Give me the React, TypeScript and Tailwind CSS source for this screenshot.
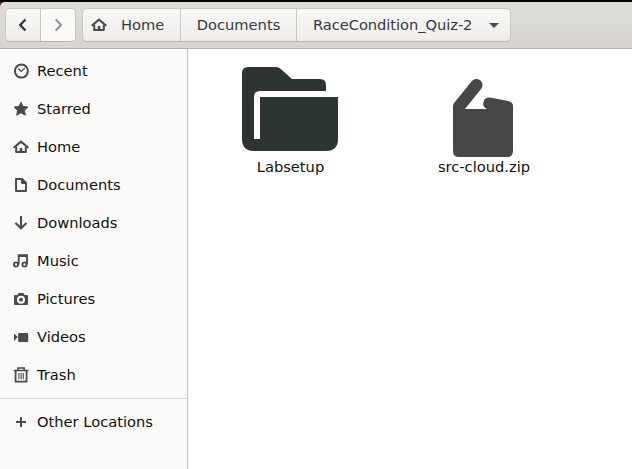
import React from "react";

type IconProps = { children: React.ReactNode };

function Icon({ children }: IconProps) {
  return (
    <svg width="16" height="16" viewBox="0 0 16 16" className="shrink-0 text-[#4a4a4a]" fill="none" stroke="currentColor" strokeWidth="2">
      {children}
    </svg>
  );
}

const house = (
  <>
    <path d="M.6 8.8 8 2.6l7.4 6.2" strokeWidth="2.1" />
    <path d="M3.2 7.5v5.6h9.6V7.5" strokeLinejoin="round" />
    <path d="M8 9v4.5" strokeWidth="2.6" />
  </>
);

const places = [
  {
    name: "Recent",
    icon: (
      <>
        <circle cx="8.4" cy="8.1" r="6.5" />
        <path d="m5.3 5.8 3 2.6 3.4-3.3" strokeWidth="1.3" />
      </>
    ),
  },
  {
    name: "Starred",
    icon: <path d="m8 1.3 2 4.2 4.9.6-3.5 3.2.9 4.9L8 11.8l-4.3 2.4.9-4.9-3.5-3.2 4.9-.6Z" fill="currentColor" strokeWidth="1" strokeLinejoin="round" />,
  },
  { name: "Home", icon: house },
  { name: "Documents", icon: <path d="M3 2h6.2L13 5.8V14H3ZM9 2.5V6h3.5" strokeLinejoin="round" strokeWidth="1.9" /> },
  { name: "Downloads", icon: <path d="M8 1v12M2.5 8 8 13.2 13.5 8" strokeWidth="2.1" /> },
  {
    name: "Music",
    icon: (
      <>
        <circle cx="3" cy="11.5" r="2.1" strokeWidth="1.8" />
        <circle cx="11.5" cy="11.5" r="2.1" strokeWidth="1.8" />
        <path d="M5.7 11.5V2.2h8.3v9.3M5.7 3H14" strokeWidth="1.8" />
      </>
    ),
  },
  {
    name: "Pictures",
    icon: (
      <path
        fill="currentColor"
        stroke="none"
        fillRule="evenodd"
        d="M5.5 2h5l1 2H14q1 0 1 1v8q0 1-1 1H2q-1 0-1-1V5q0-1 1-1h2.5ZM8 4.7a4 4 0 1 0 0 8 4 4 0 0 0 0-8Zm0 2.1a1.9 1.9 0 1 1 0 3.8 1.9 1.9 0 0 1 0-3.8Z"
      />
    ),
  },
  {
    name: "Videos",
    icon: <path fill="currentColor" stroke="none" d="M1 4.5 4.8 8 1 12ZM6.3 4H14q1.2 0 1.2 1.2v6.6q0 1.2-1.2 1.2H6.3q-1.2 0-1.2-1.2V5.2Q5.1 4 6.3 4Z" />,
  },
  {
    name: "Trash",
    icon: (
      <>
        <path d="M.8 3.5h14.7M5 3.3V1h6.2v2.3" strokeWidth="1.5" />
        <path d="M2.6 3.7v11h11v-11" strokeLinejoin="round" strokeWidth="1.8" />
        <path d="M5.9 6v6.2M8.1 6v6.2M10.3 6v6.2" strokeWidth="1.1" />
      </>
    ),
  },
];

function Place({ name, icon }: { name: string; icon: React.ReactNode }) {
  return (
    <li className="flex h-[38px] items-center gap-2 pl-[13px]">
      <Icon>{icon}</Icon>
      <span>{name}</span>
    </li>
  );
}

function HeaderBar() {
  const group = "flex h-[34px] overflow-hidden rounded-[5px] border border-[#cbc7c1] border-b-[#b9b4ac] bg-gradient-to-b from-[#f8f8f7] to-[#ededeb]";
  return (
    <header className="flex h-[47px] items-start gap-[6px] rounded-tl-[5px] border-b border-[#b6b2ac] bg-gradient-to-b from-[#dededb] to-[#d9d5d0] pl-[5px] pt-[6px] text-[#363a3b]">
      <nav className={group}>
        <button className="flex w-[35px] items-center justify-center border-r border-[#c9c5bf]">
          <svg width="16" height="16" viewBox="0 0 16 16" fill="none" stroke="#303435" strokeWidth="2.2">
            <path d="M10.5 2.5 5.2 8l5.3 5.5" />
          </svg>
        </button>
        <button className="flex w-[34px] items-center justify-center bg-[#fafaf9]">
          <svg width="16" height="16" viewBox="0 0 16 16" fill="none" stroke="#929595" strokeWidth="2.2">
            <path d="M5.7 2.5 11 8l-5.3 5.5" />
          </svg>
        </button>
      </nav>
      <nav className={group}>
        <button className="flex w-[98px] items-center gap-[14px] border-r border-[#c9c5bf] pl-2">
          <Icon>{house}</Icon>
          <span>Home</span>
        </button>
        <button className="w-[116px] border-r border-[#c9c5bf]">Documents</button>
        <button className="flex w-[213px] items-center pl-4">
          <span className="tracking-[-0.05px]">RaceCondition_Quiz-2</span>
          <svg width="10" height="5" viewBox="0 0 10 5" className="ml-[17px]" fill="#4b4e4f">
            <path d="M0 0h10L5 5Z" />
          </svg>
        </button>
      </nav>
    </header>
  );
}

export default function App() {
  return (
    <div className="flex h-[469px] w-[632px] flex-col overflow-hidden bg-white font-['DejaVu_Sans',sans-serif] text-[14.67px] leading-[18px] text-[#111]">
      <div className="h-[2px] bg-black" />
      <div className="bg-[#701019]">
        <HeaderBar />
      </div>
      <main className="flex min-h-0 flex-1">
        <aside className="w-[188px] border-r border-[#c5c3c0] bg-[#fafaf9] pt-[3px]">
          <ul>
            {places.map((place) => (
              <Place key={place.name} {...place} />
            ))}
          </ul>
          <hr className="mb-1 mt-1 border-[#dedddb]" />
          <ul>
            <Place name="Other Locations" icon={<path d="M8 3v10M3 8h10" />} />
          </ul>
        </aside>
        <section className="flex items-start pt-[18px] text-center">
          <figure className="ml-[44px] flex w-[116px] flex-col items-center">
            <svg width="96" height="84" viewBox="0 0 96 84" fill="#2d3533">
              <path d="M0 6q0-6 6-6h28q3 0 5 2.2L50 12h28q6 0 6 6v6H18q-6 0-6 6v42h6V30h78v42q0 12-12 12H12Q0 84 0 72Z" />
            </svg>
            <figcaption className="ml-[1px] mt-[7px]">Labsetup</figcaption>
          </figure>
          <figure className="ml-[77px] flex w-[116px] flex-col items-center">
            <svg width="60" height="78" viewBox="0 0 60 78" className="mt-3" fill="#464646">
              <path d="M0 27V72q0 6 6 6h48q6 0 6-6V27q0-4-5-5l-18-3.5a6 6 0 0 0-3 11.5H12L28.2 9.7A6 6 0 0 0 18.7 2.3L1.5 23.5Q0 25 0 27Z" />
            </svg>
            <figcaption className="ml-[2px] mt-[1px]">src-cloud.zip</figcaption>
          </figure>
        </section>
      </main>
    </div>
  );
}
